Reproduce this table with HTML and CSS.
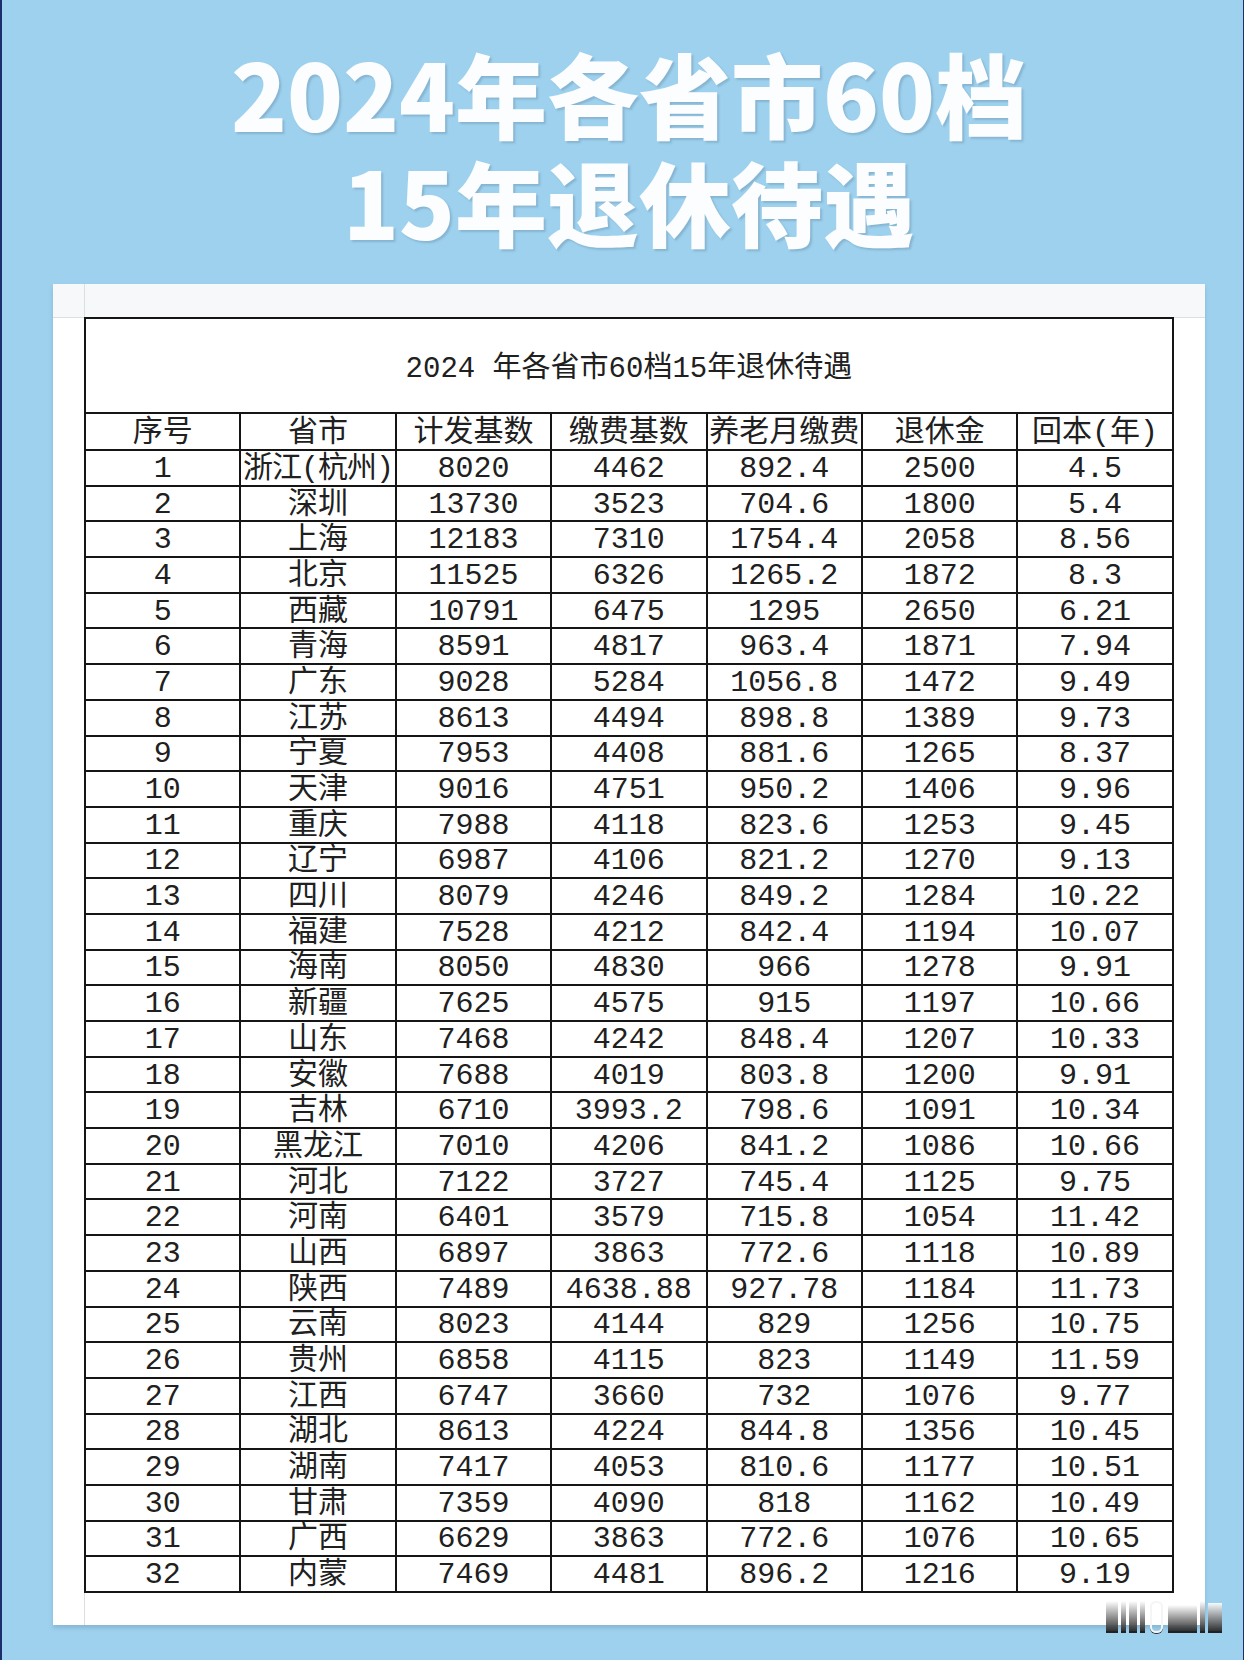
FILE: index.html
```html
<!DOCTYPE html>
<html lang="zh-CN">
<head>
<meta charset="utf-8">
<title>2024年各省市60档15年退休待遇</title>
<link rel="stylesheet" href="styles.css">
</head>
<body>
<div class="page">
  <h1 class="title"><span class="line">2024年各省市60档</span><span class="line">15年退休待遇</span></h1>
  <div class="card">
    <table class="sheet">
      <colgroup><col><col><col><col><col><col><col></colgroup>
      <tr class="caption-row"><td colspan="7">2024 年各省市60档15年退休待遇</td></tr>
      <tr class="head"><td>序号</td><td>省市</td><td>计发基数</td><td>缴费基数</td><td>养老月缴费</td><td>退休金</td><td>回本(年)</td></tr>
      <tr><td>1</td><td class="tight">浙江(杭州)</td><td>8020</td><td>4462</td><td>892.4</td><td>2500</td><td>4.5</td></tr>
      <tr><td>2</td><td>深圳</td><td>13730</td><td>3523</td><td>704.6</td><td>1800</td><td>5.4</td></tr>
      <tr><td>3</td><td>上海</td><td>12183</td><td>7310</td><td>1754.4</td><td>2058</td><td>8.56</td></tr>
      <tr><td>4</td><td>北京</td><td>11525</td><td>6326</td><td>1265.2</td><td>1872</td><td>8.3</td></tr>
      <tr><td>5</td><td>西藏</td><td>10791</td><td>6475</td><td>1295</td><td>2650</td><td>6.21</td></tr>
      <tr><td>6</td><td>青海</td><td>8591</td><td>4817</td><td>963.4</td><td>1871</td><td>7.94</td></tr>
      <tr><td>7</td><td>广东</td><td>9028</td><td>5284</td><td>1056.8</td><td>1472</td><td>9.49</td></tr>
      <tr><td>8</td><td>江苏</td><td>8613</td><td>4494</td><td>898.8</td><td>1389</td><td>9.73</td></tr>
      <tr><td>9</td><td>宁夏</td><td>7953</td><td>4408</td><td>881.6</td><td>1265</td><td>8.37</td></tr>
      <tr><td>10</td><td>天津</td><td>9016</td><td>4751</td><td>950.2</td><td>1406</td><td>9.96</td></tr>
      <tr><td>11</td><td>重庆</td><td>7988</td><td>4118</td><td>823.6</td><td>1253</td><td>9.45</td></tr>
      <tr><td>12</td><td>辽宁</td><td>6987</td><td>4106</td><td>821.2</td><td>1270</td><td>9.13</td></tr>
      <tr><td>13</td><td>四川</td><td>8079</td><td>4246</td><td>849.2</td><td>1284</td><td>10.22</td></tr>
      <tr><td>14</td><td>福建</td><td>7528</td><td>4212</td><td>842.4</td><td>1194</td><td>10.07</td></tr>
      <tr><td>15</td><td>海南</td><td>8050</td><td>4830</td><td>966</td><td>1278</td><td>9.91</td></tr>
      <tr><td>16</td><td>新疆</td><td>7625</td><td>4575</td><td>915</td><td>1197</td><td>10.66</td></tr>
      <tr><td>17</td><td>山东</td><td>7468</td><td>4242</td><td>848.4</td><td>1207</td><td>10.33</td></tr>
      <tr><td>18</td><td>安徽</td><td>7688</td><td>4019</td><td>803.8</td><td>1200</td><td>9.91</td></tr>
      <tr><td>19</td><td>吉林</td><td>6710</td><td>3993.2</td><td>798.6</td><td>1091</td><td>10.34</td></tr>
      <tr><td>20</td><td>黑龙江</td><td>7010</td><td>4206</td><td>841.2</td><td>1086</td><td>10.66</td></tr>
      <tr><td>21</td><td>河北</td><td>7122</td><td>3727</td><td>745.4</td><td>1125</td><td>9.75</td></tr>
      <tr><td>22</td><td>河南</td><td>6401</td><td>3579</td><td>715.8</td><td>1054</td><td>11.42</td></tr>
      <tr><td>23</td><td>山西</td><td>6897</td><td>3863</td><td>772.6</td><td>1118</td><td>10.89</td></tr>
      <tr><td>24</td><td>陕西</td><td>7489</td><td>4638.88</td><td>927.78</td><td>1184</td><td>11.73</td></tr>
      <tr><td>25</td><td>云南</td><td>8023</td><td>4144</td><td>829</td><td>1256</td><td>10.75</td></tr>
      <tr><td>26</td><td>贵州</td><td>6858</td><td>4115</td><td>823</td><td>1149</td><td>11.59</td></tr>
      <tr><td>27</td><td>江西</td><td>6747</td><td>3660</td><td>732</td><td>1076</td><td>9.77</td></tr>
      <tr><td>28</td><td>湖北</td><td>8613</td><td>4224</td><td>844.8</td><td>1356</td><td>10.45</td></tr>
      <tr><td>29</td><td>湖南</td><td>7417</td><td>4053</td><td>810.6</td><td>1177</td><td>10.51</td></tr>
      <tr><td>30</td><td>甘肃</td><td>7359</td><td>4090</td><td>818</td><td>1162</td><td>10.49</td></tr>
      <tr><td>31</td><td>广西</td><td>6629</td><td>3863</td><td>772.6</td><td>1076</td><td>10.65</td></tr>
      <tr><td>32</td><td>内蒙</td><td>7469</td><td>4481</td><td>896.2</td><td>1216</td><td>9.19</td></tr>
    </table>
  </div>
  <div class="watermark" aria-hidden="true">
    <span class="bar b1"></span><span class="bar b2"></span><span class="bar b3"></span><span class="bar b4"></span>
    <span class="ring"></span>
    <span class="bar b5"></span><span class="bar b6"></span><span class="bar b7"></span>
  </div>
</div>
</body>
</html>
```

FILE: styles.css
```css
html, body {
  margin: 0;
  padding: 0;
}

body {
  width: 1244px;
  height: 1660px;
  overflow: hidden;
  background: #9dd1ee;
}

.page {
  position: relative;
  box-sizing: border-box;
  width: 1244px;
  height: 1660px;
  padding: 38px 38px 0 51px;
  background: #9dd1ee;
  border-left: 2px solid #1d2e6c;
  border-right: 1px solid #1d2e6c;
}

.title {
  margin: 0;
  font-family: "Noto Sans CJK SC", "Noto Sans", sans-serif;
  font-weight: 900;
  font-size: 92px;
  line-height: 108px;
  color: #fbfdfe;
  text-align: center;
  letter-spacing: 0;
  text-shadow: 2px 2px 2px rgba(95, 130, 155, 0.35);
}

.title .line {
  display: block;
}

.card {
  margin-top: 30px;
  box-sizing: border-box;
  height: 1341px;
  padding: 33px 33px 33px 31px;
  background:
    linear-gradient(#dcdfe1, #dcdfe1) 0 33px / 100% 1px no-repeat,
    linear-gradient(#dcdfe1, #dcdfe1) 31px 0 / 1px 100% no-repeat,
    linear-gradient(#f6f8f9, #f6f8f9) 0 0 / 100% 33px no-repeat,
    #ffffff;
  box-shadow: 0 3px 4px rgba(70, 110, 140, 0.25);
}

.sheet {
  width: 1088px;
  table-layout: fixed;
  border-collapse: collapse;
  font-family: "Liberation Mono", "Noto Sans CJK SC", monospace;
  font-size: 30px;
  font-weight: 400;
  color: #202020;
  background: #ffffff;
}

.sheet col {
  width: 155.4px;
}

.sheet td {
  box-sizing: border-box;
  height: 35.7px;
  padding: 2px 0 0;
  border: 2px solid #151515;
  text-align: center;
  vertical-align: middle;
  line-height: 30px;
  white-space: nowrap;
  overflow: hidden;
}

.sheet .caption-row td {
  height: 95px;
  font-size: 29px;
  padding-top: 9px;
}

.sheet .head td {
  height: 37px;
}

.sheet td.tight {
  letter-spacing: -1px;
}

.watermark {
  position: absolute;
  left: 1104px;
  top: 1601px;
  width: 116px;
  height: 32px;
  display: flex;
  align-items: flex-end;
  gap: 3px;
}

.bar {
  display: block;
  height: 30px;
  background: linear-gradient(rgba(255,255,255,0.9), rgba(40,40,40,0.95));
  border-bottom: 2px solid #222;
}

.b1 { width: 12px; }
.b2 { width: 5px; }
.b3 { width: 8px; }
.b4 { width: 5px; }
.b5 { width: 30px; height: 26px; }
.b6 { width: 5px; }
.b7 { width: 14px; height: 28px; }

.ring {
  display: block;
  width: 9px;
  height: 28px;
  margin: 0 2px;
  border: 2px solid #f5f5f5;
  border-radius: 6px;
  box-shadow: 0 1px 0 #333;
}
```
